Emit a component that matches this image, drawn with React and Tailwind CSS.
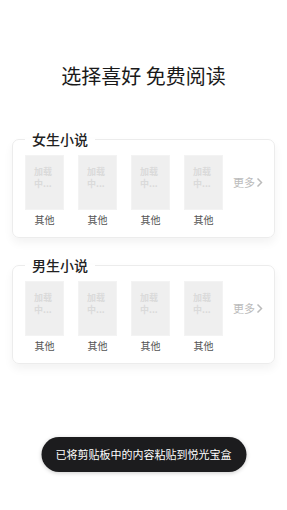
import React from 'react';

const books = ['其他', '其他', '其他', '其他'];

const Cover = () => (
  <div className="w-[39px] h-[55px] bg-[#efefef] border border-[#f3f3f3] px-[8px] pt-[10px]">
    <p className="text-[9px] leading-[12px] text-[#dadada] font-bold">加载<br />中...</p>
  </div>
);

const Section = ({ title }) => (
  <fieldset className="mx-[12px] border border-[#ececec] rounded-[7px] pl-[12px] pr-[10px] pb-[10px] shadow-[0_5px_10px_rgba(0,0,0,0.05)]">
    <legend className="px-[7px] text-[14px] leading-[20px] font-medium text-[#222]">{title}</legend>
    <div className="flex items-start mt-[6px]">
      <div className="flex gap-[14px]">
        {books.map((name, i) => (
          <div key={i} className="flex flex-col items-center">
            <Cover />
            <span className="mt-[3px] text-[10px] leading-[14px] text-[#555]">{name}</span>
          </div>
        ))}
      </div>
      <div className="ml-[10px] h-[55px] flex items-center text-[11px] text-[#bbb]">
        更多
        <svg width="7" height="11" viewBox="0 0 7 11" className="ml-[1px]">
          <path d="M1.5 1.5 L5.5 5.5 L1.5 9.5" fill="none" stroke="#bbb" strokeWidth="1.5" />
        </svg>
      </div>
    </div>
  </fieldset>
);

export default function App() {
  return (
    <div className="relative w-[287px] h-[510px] bg-white overflow-hidden" style={{ fontFamily: '"Noto Sans CJK SC", "Noto Sans", sans-serif' }}>
      <h1 className="pt-[62px] text-center text-[20px] leading-[28px] font-normal text-[#1a1a1a]">选择喜好 免费阅读</h1>
      <div className="mt-[39px] flex flex-col gap-[17px]">
        <Section title="女生小说" />
        <Section title="男生小说" />
      </div>
      <div className="absolute left-1/2 -translate-x-1/2 bottom-[38px] w-[205px] h-[35px] rounded-full bg-[#1c1c1e] flex items-center justify-center shadow-[0_1px_4px_rgba(0,0,0,0.2)]">
        <span className="text-[11px] text-white whitespace-nowrap">已将剪贴板中的内容粘贴到悦光宝盒</span>
      </div>
    </div>
  );
}
